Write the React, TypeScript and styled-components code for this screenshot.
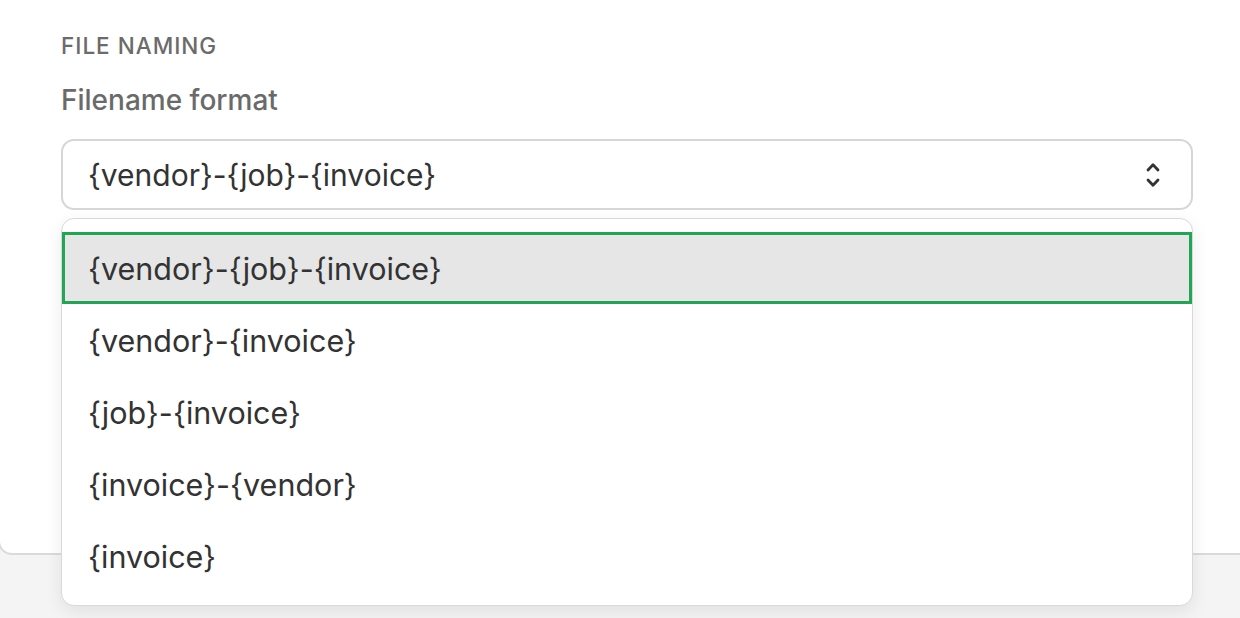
import React, { useState } from 'react';
import styled, { createGlobalStyle } from 'styled-components';

const GlobalStyle = createGlobalStyle`
  html, body {
    margin: 0;
    padding: 0;
    background: #f4f4f4;
    font-family: Inter, "Noto Sans", "Liberation Sans", sans-serif;
    overflow: hidden;
  }
`;

const formats = [
  '{vendor}-{job}-{invoice}',
  '{vendor}-{invoice}',
  '{job}-{invoice}',
  '{invoice}-{vendor}',
  '{invoice}',
];

export default function App() {
  const [selected, setSelected] = useState(0);
  return (
    <>
      <GlobalStyle />
      <StyledPage>
        <StyledCard>
          <StyledSectionTitle>File naming</StyledSectionTitle>
          <StyledLabel>Filename format</StyledLabel>
          <StyledField>
            <StyledSelect>
              <span>{formats[selected]}</span>
              <ChevronIcon />
            </StyledSelect>
            <StyledMenu>
              {formats.map((format, i) => (
                <StyledOption
                  key={format}
                  $active={i === selected}
                  onClick={() => setSelected(i)}
                >
                  {format}
                </StyledOption>
              ))}
            </StyledMenu>
          </StyledField>
        </StyledCard>
      </StyledPage>
    </>
  );
}

function ChevronIcon() {
  return (
    <svg width="14" height="28" viewBox="0 0 14 28" fill="none">
      <path
        d="M2 9 L7 3.8 L12 9"
        stroke="#333"
        strokeWidth="2.8"
        strokeLinecap="round"
        strokeLinejoin="round"
      />
      <path
        d="M2 19 L7 24.2 L12 19"
        stroke="#333"
        strokeWidth="2.8"
        strokeLinecap="round"
        strokeLinejoin="round"
      />
    </svg>
  );
}

const StyledPage = styled.div`
  height: 618px;
`;

const StyledCard = styled.div`
  box-sizing: border-box;
  margin-left: -2px;
  width: calc(100% + 40px);
  height: 555px;
  padding: 33px 0 0 61px;
  background: #fff;
  border: 2px solid #dadada;
  border-top: none;
  border-radius: 0 0 14px 14px;
`;

const StyledSectionTitle = styled.h2`
  margin: 0;
  font-size: 22.5px;
  font-weight: 500;
  line-height: 26px;
  letter-spacing: 1px;
  text-transform: uppercase;
  color: #6b6b6b;
`;

const StyledLabel = styled.label`
  display: block;
  margin-top: 24px;
  font-size: 28px;
  font-weight: 500;
  line-height: 34px;
  color: #6a6a6a;
`;

const StyledField = styled.div`
  position: relative;
  width: 1132px;
  margin-top: 22px;
`;

const StyledSelect = styled.div`
  box-sizing: border-box;
  display: flex;
  align-items: center;
  justify-content: space-between;
  height: 71px;
  padding: 0 31px 0 25px;
  border: 2px solid #d6d6d6;
  border-radius: 13px;
  background: #fff;
  font-size: 30px;
  color: #333;
`;

const StyledMenu = styled.ul`
  position: absolute;
  top: 79px;
  left: 0;
  right: 0;
  box-sizing: border-box;
  margin: 0;
  padding: 13px 0 13px;
  list-style: none;
  background: #fff;
  border: 1.5px solid #d9d9d9;
  border-radius: 13px;
  box-shadow: 0 6px 18px rgba(0, 0, 0, 0.08);
`;

const StyledOption = styled.li<{ $active: boolean }>`
  box-sizing: border-box;
  display: flex;
  align-items: center;
  height: 72px;
  padding: 0 23px;
  font-size: 30.5px;
  color: #333;
  cursor: pointer;
  background: ${(p) => (p.$active ? '#e6e6e6' : 'transparent')};
  border: 3px solid ${(p) => (p.$active ? '#21a655' : 'transparent')};
`;
